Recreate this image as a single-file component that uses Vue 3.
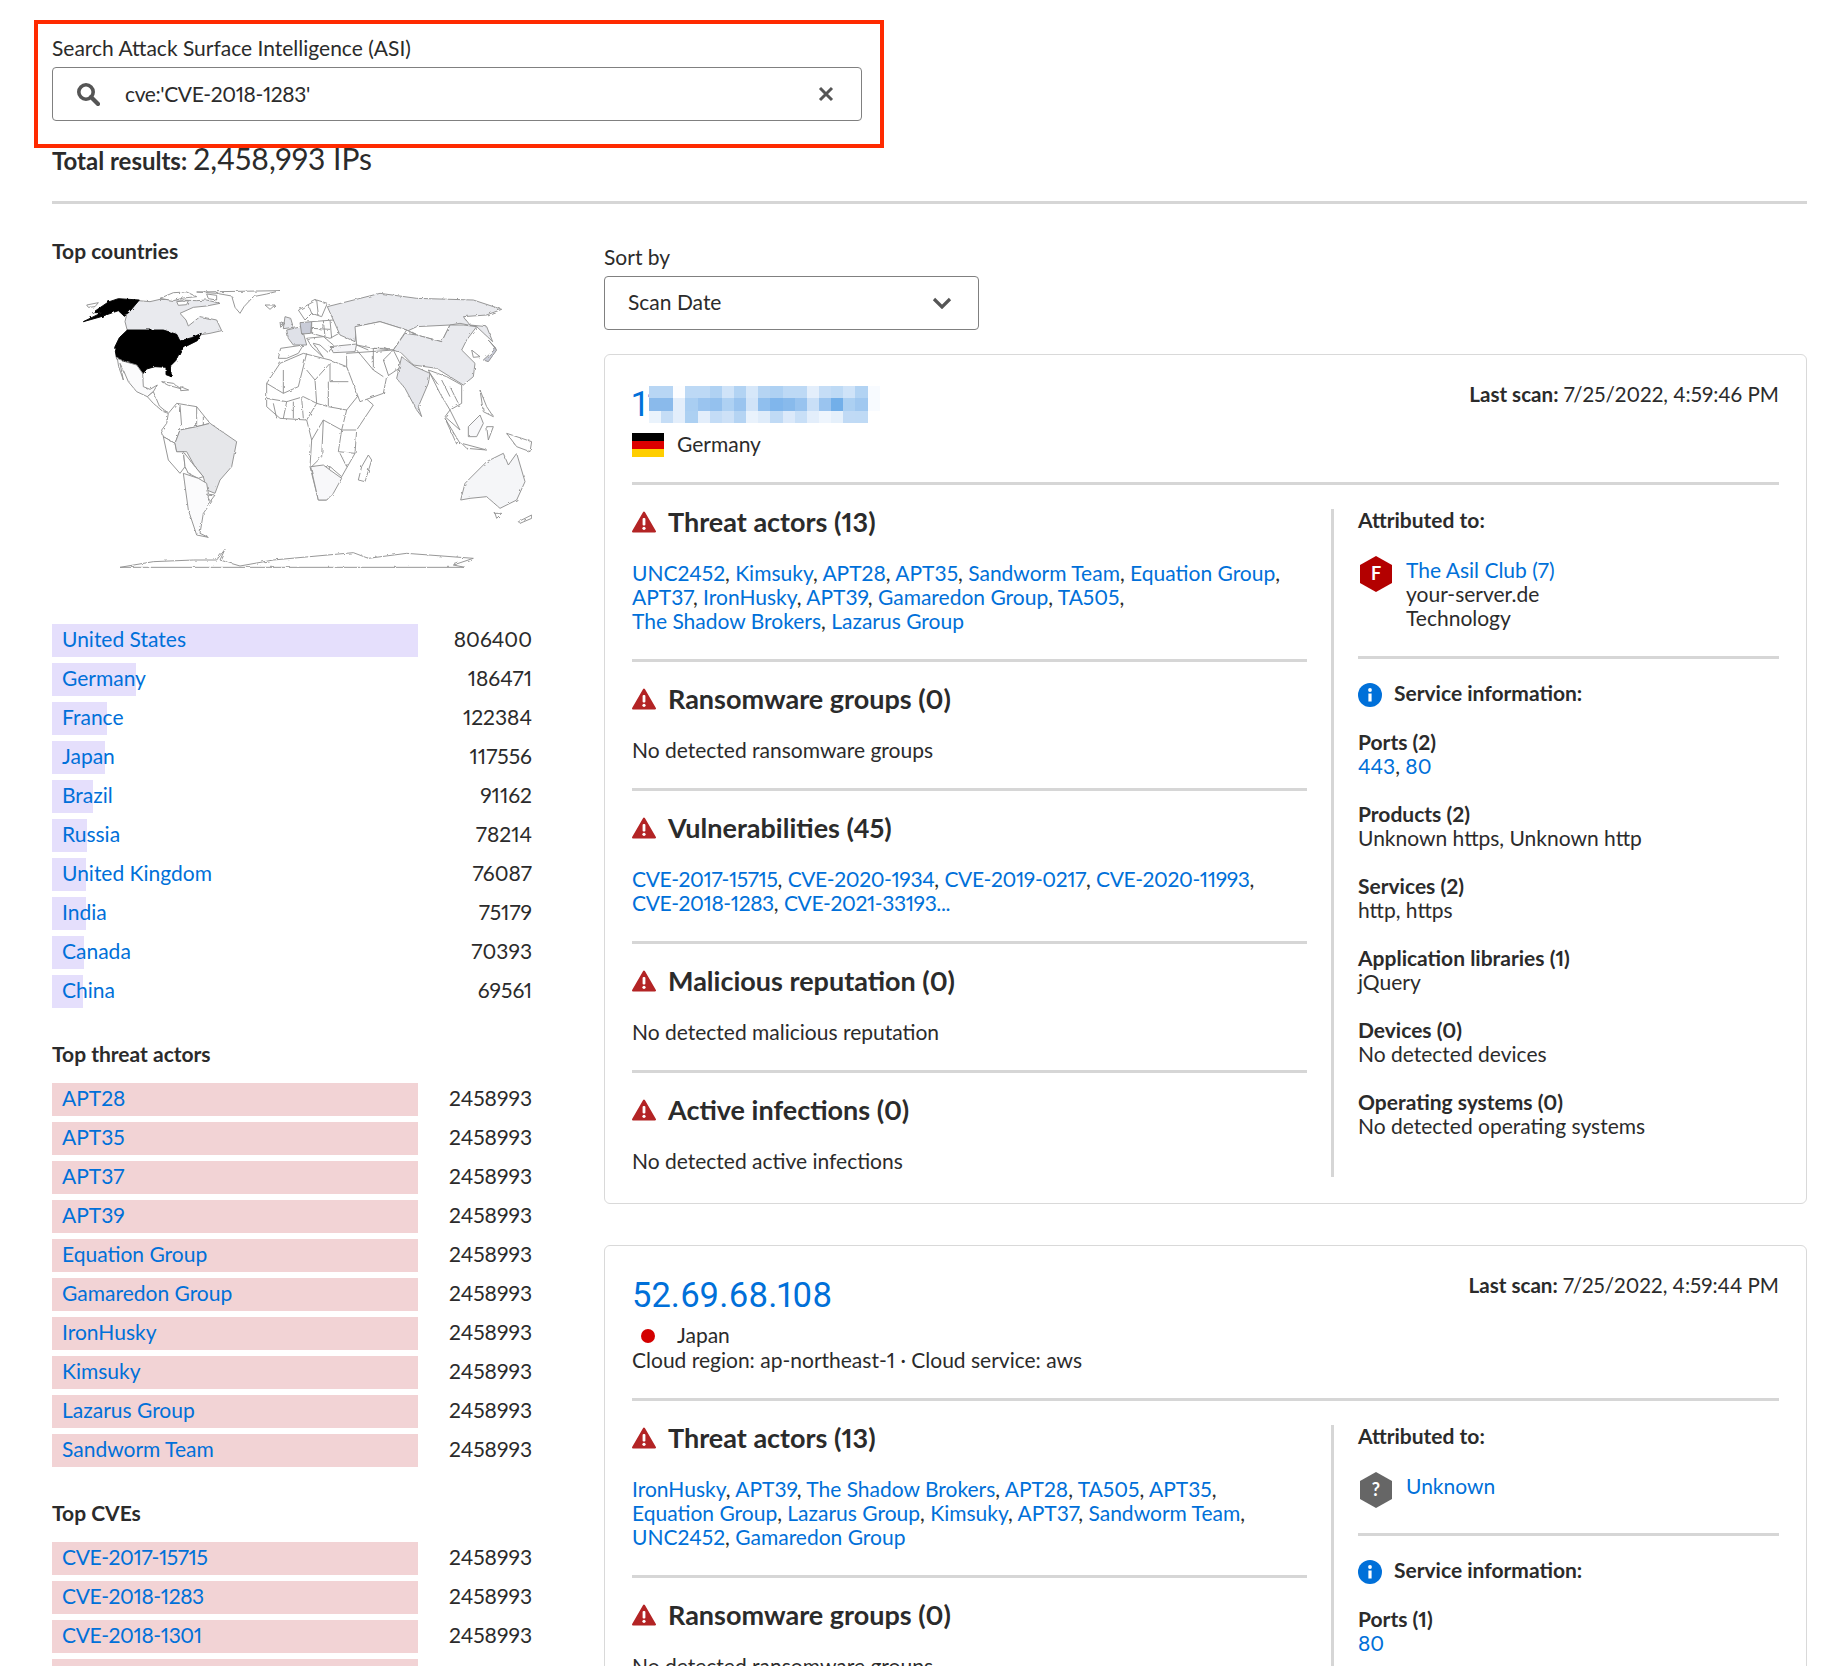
<template>
  <div class="page">
    <div class="search-box">
      <label class="search-label">Search Attack Surface Intelligence (ASI)</label>
      <div class="search-input">
        <svg class="search-icon" viewBox="0 0 24 24" width="24" height="24">
          <circle cx="10" cy="10" r="7.2" fill="none" stroke="#555" stroke-width="3.6" />
          <path d="M15 15l7 7" stroke="#555" stroke-width="4.2" stroke-linecap="round" />
        </svg>
        <input type="text" value="cve:'CVE-2018-1283'" readonly />
        <svg class="clear-icon" viewBox="0 0 16 16" width="16" height="16">
          <path d="M2 2l12 12M14 2L2 14" stroke="#555" stroke-width="3" />
        </svg>
      </div>
    </div>

    <div class="total"><b>Total results:</b> <span>2,458,993 IPs</span></div>
    <hr class="line" />

    <div class="main">
      <aside class="side">
        <h3>Top countries</h3>
        <svg class="map" viewBox="0 0 1560 960" width="520" height="320">
          <defs>
            <filter id="rough" x="0" y="0" width="100%" height="100%">
              <feTurbulence type="fractalNoise" baseFrequency="0.07" numOctaves="2" seed="4" />
              <feDisplacementMap in="SourceGraphic" scale="8" />
            </filter>
          </defs>
          <g filter="url(#rough)" stroke="#8f8f8f" stroke-width="2.8" fill="#fff" stroke-linejoin="round">
            <!-- north america -->
            <path fill="#e9eaee" d="M295 92L330 95 360 88 420 90 470 92 500 90 540 100 500 108 460 112 420 130 438 150 445 168 480 140 530 150 545 182 510 190 478 195 455 207 420 216 410 195 370 182 262 182 255 155 262 125Z" />
            <path d="M470 66L720 62 680 72 640 80 612 110 600 130 585 112 575 78 530 70Z" />
            <path d="M360 85L400 68 440 66 470 80 430 84 400 92ZM410 95L445 92 440 104 415 106ZM500 72L530 76 530 90 505 86Z" />
            <path d="M140 105L175 98 165 110 145 112Z" />
            <path fill="#000" stroke="#000" d="M158 128L205 96 235 86 298 90 266 128 250 136 235 122 215 129 180 141 130 155 185 128Z" />
            <path fill="#000" stroke="#000" d="M262 180L370 180 410 193 420 213 455 203 484 190 472 212 442 227 422 242 407 272 392 287 394 320 378 314 378 292 345 290 320 297 308 312 288 287 255 277 230 267 224 232 238 203Z" />
            <path fill="#fbfbfc" d="M232 265L255 275 290 285 308 310 310 350 330 358 352 345 340 365 322 380 290 365 265 335 250 300 240 280 250 330 236 290Z" />
            <path d="M322 380L340 365 358 408 385 430 368 424 340 400Z" />
            <path d="M365 335L400 340 422 356 385 346ZM422 350L446 360 422 362Z" />
            <!-- south america -->
            <path d="M385 430L410 400 440 405 470 410 510 460 470 470 420 480 405 520 370 500 365 480 380 460Z" />
            <path fill="none" d="M420 405L425 470M470 410L470 470M490 440L490 465" />
            <path d="M370 500L405 520 410 545 430 545 435 590 420 610 385 570Z" />
            <path fill="#e6e7ea" d="M420 480L470 470 510 460 590 515 575 590 540 630 525 670 500 660 490 620 465 590 440 545 410 545 405 520Z" />
            <path d="M430 545L465 590 490 620 475 625 445 610 435 590Z" />
            <path fill="#fbfbfc" d="M430 610L475 625 500 640 505 670 515 695 490 730 480 790 505 802 470 795 445 720Z" />
            <path d="M500 672L525 675 510 695Z" />
            <!-- africa -->
            <path d="M680 340L720 280 790 250 870 270 920 290 960 370 1000 405 950 480 945 550 905 620 860 690 835 690 810 590 815 510 800 450 720 445 680 410Z" />
            <path fill="none" d="M730 300L730 370 680 340M730 370L775 350 800 250M800 300L825 330 870 280M870 280L870 335 925 335M825 330L830 400 800 450M865 335L865 410 830 400M865 410L920 420 960 370M680 385L740 395 790 380 830 400M740 395L730 445M760 395L760 445M785 385L790 445M920 420L905 480 850 450 815 510M905 480L950 480M905 480L895 545 945 550M850 450L845 560 815 590M815 590L870 590 905 620M870 590L850 640 885 650M700 400L710 445M900 550L920 590" />
            <path fill="#f8f8fa" d="M812 590L850 585 870 600 905 625 880 670 860 690 835 690Z" />
            <path d="M985 555L995 570 975 635 955 630 965 590Z" />
            <!-- europe -->
            <path d="M715 265L722 235 790 225 775 250 740 265Z" />
            <path fill="#dfe1e8" d="M740 180L785 170 800 225 760 225 745 205Z" />
            <path fill="#c9ccd8" d="M780 158L815 155 812 190 785 192Z" />
            <path fill="#e6e7ec" d="M735 140L752 145 760 172 730 176ZM720 155L735 160 722 172Z" />
            <path d="M775 120L830 90 862 100 845 140 815 130 795 150Z" />
            <path fill="none" d="M805 105L815 130M830 90L835 135" />
            <path d="M815 155L880 150 915 180 870 205 815 190Z" />
            <path fill="none" d="M850 152L855 200M815 175L870 178M870 150L875 205" />
            <path d="M800 205L850 200 880 225 865 248 840 225 820 220 850 262 815 230Z" />
            <path d="M675 105L705 105 690 118Z" />
            <path fill="#f5f5f8" d="M870 230L950 222 945 245 880 248Z" />
            <!-- asia -->
            <path fill="#e9eaee" d="M862 110L1020 70 1130 85 1300 90 1385 118 1340 135 1270 140 1290 165 1340 170 1358 215 1310 170 1260 160 1230 165 1205 215 1130 195 1100 180 1020 155 950 170 945 215 900 195 880 150Z" />
            <path d="M945 170L1020 155 1100 180 1060 240 1000 235 950 225Z" />
            <path d="M1105 182L1130 170 1230 165 1205 215 1130 195Z" />
            <path fill="#e9eaee" d="M1095 190L1130 195 1205 215 1230 165 1270 165 1310 170 1280 210 1265 240 1305 280 1300 320 1270 345 1190 295 1120 285 1085 250 1060 240Z" />
            <path d="M920 250L1060 240 1085 290 1040 320 1030 370 960 395 920 290Z" />
            <path fill="none" d="M950 240L1000 300 1030 320M1000 235L1000 300M1060 240L1030 270 1045 315M950 225L985 240M1000 235L1040 235" />
            <path fill="#e6e7ec" d="M1085 260L1125 290 1170 310 1165 340 1135 410 1145 440 1130 420 1095 355 1070 325Z" />
            <path d="M1165 300L1220 320 1265 345 1265 400 1230 420 1200 370ZM1230 420L1260 480 1215 440Z" />
            <path fill="none" d="M1205 330L1230 380M1230 350L1255 400M1170 310L1195 345" />
            <path d="M1215 445L1260 520 1250 522ZM1265 520L1340 540 1280 535Z" />
            <path fill="#f8f8fa" d="M1285 470L1320 435 1330 460 1310 500 1285 500Z" />
            <path d="M1320 360L1340 410 1360 440 1330 425ZM1340 470L1360 470 1345 510ZM1400 490L1475 515 1470 545 1430 530Z" />
            <path fill="#c9ccd8" d="M1330 270L1368 235 1345 210 1370 240 1345 275Z" />
            <path d="M1295 240L1320 260 1300 262Z" />
            <!-- australia -->
            <path fill="#f5f6f8" d="M1275 640L1340 575 1390 550 1405 585 1430 550 1455 635 1430 690 1380 715 1340 680 1290 685 1262 690Z" />
            <path d="M1365 730L1385 730 1370 745ZM1435 755L1475 735 1475 745 1440 760Z" />
            <!-- antarctica -->
            <path d="M240 892L340 875 460 870 530 870 555 838 540 870 600 888 700 870 940 848 985 865 1100 850 1300 865 1240 885 1275 892Z" />
          </g>
        </svg>

        <div class="bars countries">
          <div v-for="c in countries" :key="c.name" class="bar-row">
            <div class="bar-cell">
              <div class="bar purple" :style="{ width: c.w + 'px' }"></div>
              <a>{{ c.name }}</a>
            </div>
            <span class="num">{{ c.n }}</span>
          </div>
        </div>

        <h3 class="next">Top threat actors</h3>
        <div class="bars">
          <div v-for="a in actors" :key="a" class="bar-row">
            <div class="bar-cell">
              <div class="bar red full"></div>
              <a>{{ a }}</a>
            </div>
            <span class="num">2458993</span>
          </div>
        </div>

        <h3 class="next">Top CVEs</h3>
        <div class="bars">
          <div v-for="a in cves" :key="a" class="bar-row">
            <div class="bar-cell">
              <div class="bar red full"></div>
              <a class="cve">{{ a }}</a>
            </div>
            <span class="num">2458993</span>
          </div>
          <div class="bar-row">
            <div class="bar-cell">
              <div class="bar red full"></div>
            </div>
          </div>
        </div>
      </aside>

      <section class="results">
        <div class="sort-label">Sort by</div>
        <div class="select">
          <span>Scan Date</span>
          <svg viewBox="0 0 20 12" width="20" height="12">
            <path d="M2 2l8 8 8-8" fill="none" stroke="#555" stroke-width="3.2" />
          </svg>
        </div>

        <article v-for="(r, idx) in results" :key="idx" class="card">
          <header class="card-head">
            <div>
              <div class="ip">
                {{ r.ip }}
                <div v-if="r.blur" class="mosaic">
                  <div v-for="(row, i) in mosaic" :key="i" class="mosaic-row">
                    <i v-for="(col, j) in row" :key="j" :style="{ background: '#' + col }"></i>
                  </div>
                </div>
              </div>
              <div class="country">
                <svg class="flag" viewBox="0 0 32 24" width="32" height="24">
                  <template v-if="r.country === 'Germany'">
                    <rect width="32" height="8" fill="#000" />
                    <rect y="8" width="32" height="8" fill="#d00" />
                    <rect y="16" width="32" height="8" fill="#ffce00" />
                  </template>
                  <circle v-else cx="16" cy="12" r="7" fill="#d30000" />
                </svg>
                <span>{{ r.country }}</span>
              </div>
              <div v-if="r.cloud" class="cloud">{{ r.cloud }}</div>
            </div>
            <div class="scan"><b>Last scan:</b> {{ r.scan }}</div>
          </header>
          <hr class="line" />

          <div class="card-body">
            <div class="threats">
              <div v-for="s in r.sections" :key="s.title" class="threat">
                <h2>
                  <svg viewBox="0 0 24 22" width="24" height="22">
                    <path d="M12 1.5L23 20.5H1Z" fill="#b32425" stroke="#b32425" stroke-width="2" stroke-linejoin="round" />
                    <rect x="10.6" y="7" width="2.8" height="7.5" rx="1" fill="#fff" />
                    <circle cx="12" cy="17.3" r="1.6" fill="#fff" />
                  </svg>
                  {{ s.title }}
                </h2>
                <div v-if="s.lines" class="links">
                  <div v-for="(line, i) in s.lines" :key="i">
                    <template v-for="(l, j) in line" :key="l">
                      <a :class="{ cve: l.startsWith('CVE') }">{{ l }}</a><template v-if="j < line.length - 1 || i < s.lines.length - 1">, </template>
                    </template>
                  </div>
                </div>
                <p v-else>{{ s.empty }}</p>
              </div>
            </div>

            <div class="details">
              <h4>Attributed to:</h4>
              <div class="attrib">
                <svg class="hex" viewBox="0 0 32 36" width="32" height="36">
                  <path d="M16 0l16 9v18l-16 9-16-9V9z" :fill="r.org.fill" />
                  <text x="16" y="24" text-anchor="middle" fill="#fff">{{ r.org.grade }}</text>
                </svg>
                <div class="org">
                  <a>{{ r.org.name }}</a>
                  <div v-if="r.org.domain">{{ r.org.domain }}</div>
                  <div v-if="r.org.sector">{{ r.org.sector }}</div>
                </div>
              </div>
              <hr class="line" />
              <div class="service-title">
                <svg viewBox="0 0 24 24" width="24" height="24">
                  <circle cx="12" cy="12" r="12" fill="#0070d9" />
                  <rect x="10.4" y="10.5" width="3.2" height="8" fill="#fff" />
                  <circle cx="12" cy="7" r="1.9" fill="#fff" />
                </svg>
                <b>Service information:</b>
              </div>
              <div v-for="d in r.details" :key="d.label" class="detail">
                <b>{{ d.label }}</b>
                <div v-if="d.links">
                  <template v-for="(l, j) in d.links" :key="l">
                    <a>{{ l }}</a><template v-if="j < d.links.length - 1">, </template>
                  </template>
                </div>
                <div v-else>{{ d.text }}</div>
              </div>
            </div>
          </div>
        </article>
      </section>
    </div>
  </div>
</template>

<script setup>
const countries = [
  { name: 'United States', n: 806400, w: 366 },
  { name: 'Germany', n: 186471, w: 84 },
  { name: 'France', n: 122384, w: 55 },
  { name: 'Japan', n: 117556, w: 53 },
  { name: 'Brazil', n: 91162, w: 41 },
  { name: 'Russia', n: 78214, w: 35 },
  { name: 'United Kingdom', n: 76087, w: 34 },
  { name: 'India', n: 75179, w: 34 },
  { name: 'Canada', n: 70393, w: 32 },
  { name: 'China', n: 69561, w: 31 },
];

const actors = ['APT28', 'APT35', 'APT37', 'APT39', 'Equation Group', 'Gamaredon Group', 'IronHusky', 'Kimsuky', 'Lazarus Group', 'Sandworm Team'];
const cves = ['CVE-2017-15715', 'CVE-2018-1283', 'CVE-2018-1301'];

const mosaic = [
  ['b8d6f4', 'b8d6f4', 'fcfdff', 'bdd9f5', 'bdd9f5', 'b0d2f3', 'cfe3f8', 'b2d3f3', 'd6e7f9', 'b5d4f3', 'aed1f3', 'bdd9f5', 'bdd9f5', 'e3eefb', 'c5ddf6', 'bedaf5', 'cfe3f8', 'b2d3f3', 'f8fbff'],
  ['8abaeb', '8abaeb', 'e3eefb', 'a9cef2', '9ac4ef', '94c1ee', 'aed1f3', '9ac4ef', 'd0e3f8', '90bfee', '80b6ec', '88baec', '98c3ef', 'c9dff7', '9ac4ef', '72afe9', 'acd0f2', 'a0c8f0', 'f8fbff'],
  ['eaf3fc', 'c5ddf6', 'e3eefb', 'acd0f2', 'e3eefb', 'c3dcf6', 'cde1f7', 'b5d4f3', 'e9f2fc', 'dfecfa', 'c0daf5', 'dbe9fa', 'c8dff7', 'e3eefb', 'eef5fd', 'e5f0fb', 'c0daf5', 'bfdaf5', 'ffffff'],
];

const results = [
  {
    ip: '11',
    blur: true,
    country: 'Germany',
    scan: '7/25/2022, 4:59:46 PM',
    org: { name: 'The Asil Club (7)', domain: 'your-server.de', sector: 'Technology', grade: 'F', fill: '#b30000' },
    sections: [
      {
        title: 'Threat actors (13)',
        lines: [
          ['UNC2452', 'Kimsuky', 'APT28', 'APT35', 'Sandworm Team', 'Equation Group'],
          ['APT37', 'IronHusky', 'APT39', 'Gamaredon Group', 'TA505'],
          ['The Shadow Brokers', 'Lazarus Group'],
        ],
      },
      { title: 'Ransomware groups (0)', empty: 'No detected ransomware groups' },
      {
        title: 'Vulnerabilities (45)',
        lines: [
          ['CVE-2017-15715', 'CVE-2020-1934', 'CVE-2019-0217', 'CVE-2020-11993'],
          ['CVE-2018-1283', 'CVE-2021-33193...'],
        ],
      },
      { title: 'Malicious reputation (0)', empty: 'No detected malicious reputation' },
      { title: 'Active infections (0)', empty: 'No detected active infections' },
    ],
    details: [
      { label: 'Ports (2)', links: ['443', '80'] },
      { label: 'Products (2)', text: 'Unknown https, Unknown http' },
      { label: 'Services (2)', text: 'http, https' },
      { label: 'Application libraries (1)', text: 'jQuery' },
      { label: 'Devices (0)', text: 'No detected devices' },
      { label: 'Operating systems (0)', text: 'No detected operating systems' },
    ],
  },
  {
    ip: '52.69.68.108',
    country: 'Japan',
    cloud: 'Cloud region: ap-northeast-1 · Cloud service: aws',
    scan: '7/25/2022, 4:59:44 PM',
    org: { name: 'Unknown', grade: '?', fill: '#666' },
    sections: [
      {
        title: 'Threat actors (13)',
        lines: [
          ['IronHusky', 'APT39', 'The Shadow Brokers', 'APT28', 'TA505', 'APT35'],
          ['Equation Group', 'Lazarus Group', 'Kimsuky', 'APT37', 'Sandworm Team'],
          ['UNC2452', 'Gamaredon Group'],
        ],
      },
      { title: 'Ransomware groups (0)', empty: 'No detected ransomware groups' },
    ],
    details: [{ label: 'Ports (1)', links: ['80'] }],
  },
];
</script>

<style scoped>
.page {
  box-sizing: border-box;
  height: 1666px;
  overflow: hidden;
  padding: 20px 37px 0 34px;
  font-family: Lato, 'Liberation Sans', sans-serif;
  font-size: 21px;
  line-height: 24px;
  font-variant-numeric: proportional-nums;
  color: #2b2b2b;
  background: #fff;
}

.search-box {
  box-sizing: border-box;
  width: 850px;
  height: 128px;
  border: 4px solid #ff2a00;
  padding: 12px 18px 0 14px;
}

.search-label {
  display: block;
  height: 24px;
}

.search-input {
  box-sizing: border-box;
  display: flex;
  align-items: center;
  margin-top: 7px;
  height: 54px;
  padding: 0 27px 0 23px;
  border: 1px solid #808080;
  border-radius: 4px;
}

.search-input input {
  flex: 1;
  min-width: 0;
  height: 24px;
  margin: -1px 0 0 25px;
  border: 0;
  outline: 0;
  padding: 0;
  font: inherit;
  font-variant-numeric: proportional-nums;
  letter-spacing: -0.4px;
  color: inherit;
}

.total {
  margin: -2px 0 0 18px;
  height: 24px;
  font-size: 24px;
}

.total span {
  font-size: 30px;
}

.line {
  height: 3px;
  margin: 0;
  border: 0;
  background: #d6d6d6;
}

.page > .line {
  margin: 31px 0 0 18px;
}

.main {
  display: flex;
  gap: 72px;
  margin-left: 18px;
}

.side {
  width: 480px;
  flex: none;
  padding-top: 35px;
}

h3 {
  margin: 0;
  font-size: 21px;
  line-height: 24px;
  font-weight: 700;
}

h3.next {
  margin-top: 34px;
}

.map {
  display: block;
  margin: 7px 0 34px -12px;
}

.bars {
  display: flex;
  flex-direction: column;
  gap: 6px;
  margin-top: 17px;
}

.countries {
  margin-top: 0;
}

.bar-row {
  display: flex;
  justify-content: space-between;
  height: 33px;
  line-height: 30px;
}

.bar-cell {
  position: relative;
  width: 366px;
  height: 33px;
  padding-left: 10px;
  box-sizing: border-box;
}

.bar {
  position: absolute;
  left: 0;
  top: 0;
  bottom: 0;
}

.bar.full {
  width: 366px;
}

.bar-cell a {
  position: relative;
}

.purple {
  background: #e5dffc;
}

.red {
  background: #f2d3d5;
}

a {
  color: #0070d9;
}

a.cve {
  letter-spacing: -0.4px;
}

.results {
  flex: 1;
  min-width: 0;
  padding-top: 41px;
}

.select {
  box-sizing: border-box;
  display: flex;
  align-items: center;
  justify-content: space-between;
  width: 375px;
  height: 54px;
  margin: 7px 0 24px;
  padding: 0 26px 0 23px;
  border: 1px solid #808080;
  border-radius: 4px;
}

.select span {
  margin-top: -3px;
}

.card {
  margin-bottom: 41px;
  padding: 27px 27px 26px;
  border: 1px solid #d9d9d9;
  border-radius: 6px;
}

.card-head {
  display: flex;
  justify-content: space-between;
  margin-bottom: 25px;
}

.ip {
  position: relative;
  height: 44px;
  margin-bottom: 7px;
  font-family: Roboto, sans-serif;
  font-size: 34.5px;
  line-height: 44px;
  color: #0070d9;
}

.mosaic {
  position: absolute;
  left: 17px;
  top: 4px;
}

.mosaic-row {
  display: flex;
  height: 12.3px;
}

.mosaic-row i {
  width: 12.15px;
  flex: none;
}

.country {
  display: flex;
  align-items: center;
  gap: 13px;
  height: 24px;
}

.country span {
  margin-top: -2px;
}

.cloud {
  margin: 0 0 1px;
}

.scan {
  font-size: 20.6px;
}

.flag {
  display: block;
}

.card-body {
  display: flex;
  margin-top: 24px;
}

.threats {
  width: 675px;
  flex: none;
  margin-right: 24px;
  padding-bottom: 3px;
}

.threat + .threat {
  margin-top: 26px;
  padding-top: 24px;
  border-top: 3px solid #d6d6d6;
}

h2 {
  display: flex;
  align-items: center;
  gap: 12px;
  margin: -1px 0 26px;
  font-size: 27px;
  line-height: 28px;
  font-weight: 700;
}

.threat p,
.links {
  margin: -1px 0 1px;
}

.details {
  flex: 1;
  min-width: 0;
  padding-left: 24px;
  border-left: 3px solid #d6d6d6;
}

h4 {
  margin: -1px 0 26px;
  font-size: 21px;
  line-height: 24px;
  font-weight: 700;
}

.attrib {
  display: flex;
  gap: 14px;
  padding-left: 2px;
  margin-bottom: 25px;
}

.org {
  margin-bottom: 1px;
}

.hex {
  flex: none;
  margin-top: -2px;
}

.hex text {
  font: 700 18px Lato, sans-serif;
}

.service-title {
  display: flex;
  align-items: center;
  gap: 12px;
  margin: 24px 0;
}

.service-title b {
  margin-top: -4px;
}

.detail {
  margin: 0 0 24px;
}

.service-title + .detail {
  margin-top: -1px;
}

.detail:last-child {
  margin-bottom: 0;
}

.detail b {
  display: block;
}
</style>

<style>
html,
body {
  margin: 0;
  background: #fff;
}
</style>
